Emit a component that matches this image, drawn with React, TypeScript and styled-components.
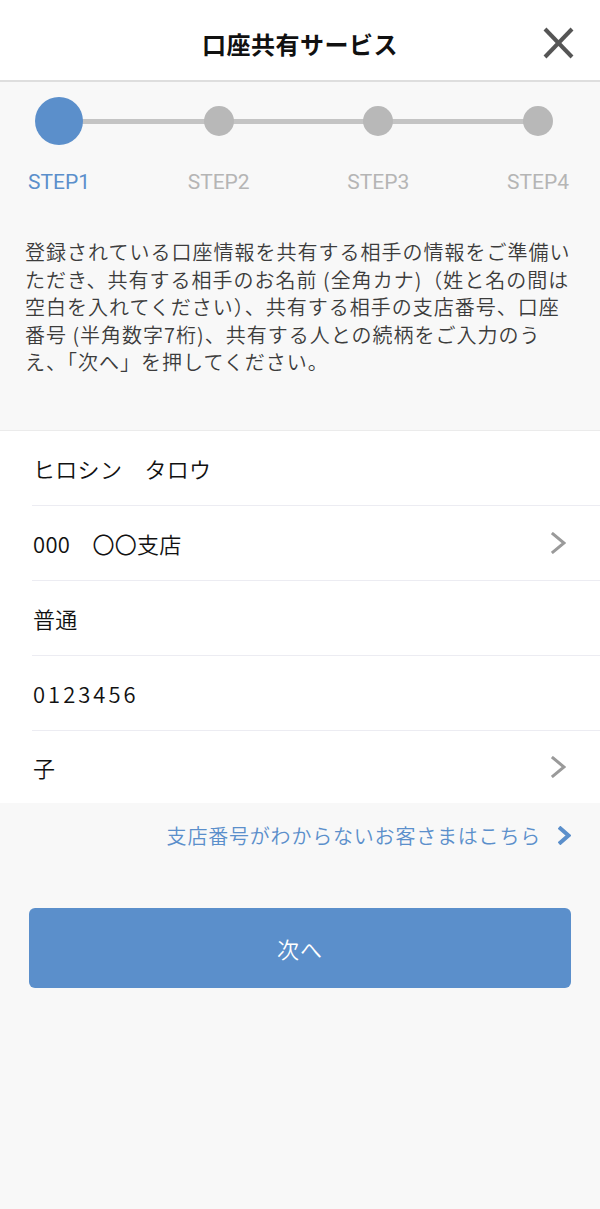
import React from "react";
import styled, { createGlobalStyle } from "styled-components";

const GlobalStyle = createGlobalStyle`
  html, body {
    margin: 0;
    padding: 0;
    background: #f8f8f8;
  }
  body {
    font-family: "Noto Sans CJK JP", "Noto Sans", sans-serif;
  }
  * { box-sizing: border-box; }
`;

const Page = styled.div`
  width: 600px;
  min-height: 1209px;
  background: #f8f8f8;
  display: flex;
  flex-direction: column;
`;

const Header = styled.header`
  height: 82px;
  background: #ffffff;
  border-bottom: 2px solid #dedede;
  display: grid;
  grid-template-columns: 1fr auto 1fr;
  align-items: center;
`;

const Title = styled.h1`
  grid-column: 2;
  margin: 0;
  font-size: 24px;
  font-weight: 700;
  color: #111;
  letter-spacing: 0.5px;
  line-height: 1;
  padding-top: 8px;
`;

const CloseButton = styled.button`
  grid-column: 3;
  justify-self: end;
  margin-right: 26px;
  margin-top: 6px;
  width: 31px;
  height: 32px;
  padding: 0;
  border: none;
  background: none;
  display: flex;
`;

const Stepper = styled.div`
  position: relative;
  display: grid;
  grid-template-columns: repeat(4, 118px);
  justify-content: space-between;
  padding: 15px 3px 0 0;
  &::before {
    content: "";
    position: absolute;
    left: 59px;
    right: 62px;
    top: 37px;
    height: 5px;
    background: #c4c4c4;
  }
`;

const Step = styled.div`
  display: flex;
  flex-direction: column;
  align-items: center;
`;

const DotSlot = styled.div`
  height: 48px;
  display: flex;
  align-items: center;
  justify-content: center;
  position: relative;
  z-index: 1;
`;

const Dot = styled.div<{ $active?: boolean }>`
  width: ${(p) => (p.$active ? 48 : 30)}px;
  height: ${(p) => (p.$active ? 48 : 30)}px;
  border-radius: 50%;
  background: ${(p) => (p.$active ? "#5b8fcb" : "#b8b8b8")};
`;

const StepLabel = styled.div<{ $active?: boolean }>`
  margin-top: 25px;
  font-family: Roboto, "Liberation Sans", sans-serif;
  font-size: 21px;
  line-height: 24px;
  color: ${(p) => (p.$active ? "#5b8fcb" : "#b5b5b5")};
`;

const Description = styled.p`
  margin: 44px 0 0;
  padding: 0 25px;
  font-size: 20px;
  font-weight: 350;
  letter-spacing: 1px;
  line-height: 27.5px;
  color: #3c3c3c;
  white-space: nowrap;
`;

const List = styled.div`
  margin-top: 54px;
  background: #fff;
  border-top: 1px solid #ebebeb;
  display: flex;
  flex-direction: column;
`;

const Row = styled.div`
  height: 75px;
  margin-left: 32px;
  padding-right: 34px;
  display: flex;
  align-items: center;
  justify-content: space-between;
  border-bottom: 1px solid #ececf2;
  &:last-child {
    border-bottom: none;
    height: 72px;
  }
`;

const RowText = styled.span<{ $digits?: boolean }>`
  font-size: 22px;
  font-weight: 350;
  color: #111;
  letter-spacing: ${(p) => (p.$digits ? "3px" : "0.3px")};
  padding-left: 1px;
`;

const LinkRow = styled.a`
  margin-top: 19px;
  align-self: flex-end;
  margin-right: 29px;
  display: flex;
  align-items: center;
  gap: 17px;
  text-decoration: none;
  font-size: 20px;
  font-weight: 350;
  letter-spacing: 0.8px;
  line-height: 28px;
  color: #5b8fcb;
`;

const NextButton = styled.button`
  margin: 58px 29px 0;
  height: 80px;
  border: none;
  border-radius: 6px;
  background: #5b8fcb;
  color: #fff;
  font-family: "Noto Sans CJK JP", sans-serif;
  font-size: 22px;
  font-weight: 350;
  letter-spacing: 1px;
`;

const Chevron = ({ color, w, h, sw }: { color: string; w: number; h: number; sw: number }) => (
  <svg width={w} height={h} viewBox={`0 0 ${w} ${h}`} fill="none">
    <polyline
      points={`${sw / 2 + 0.5},${sw / 2 + 0.5} ${w - sw / 2 - 0.5},${h / 2} ${sw / 2 + 0.5},${h - sw / 2 - 0.5}`}
      stroke={color}
      strokeWidth={sw}
      strokeLinecap="square"
      strokeLinejoin="miter"
    />
  </svg>
);

const steps = ["STEP1", "STEP2", "STEP3", "STEP4"];

const rows: { text: string; chevron?: boolean; digits?: boolean }[] = [
  { text: "ヒロシン　タロウ" },
  { text: "000　〇〇支店", chevron: true },
  { text: "普通" },
  { text: "0123456", digits: true },
  { text: "子", chevron: true },
];

export default function App() {
  return (
    <>
      <GlobalStyle />
      <Page>
        <Header>
          <Title>口座共有サービス</Title>
          <CloseButton aria-label="閉じる">
            <svg width="31" height="32" viewBox="0 0 31 32">
              <line x1="2" y1="2" x2="29" y2="30" stroke="#555" strokeWidth="4" />
              <line x1="29" y1="2" x2="2" y2="30" stroke="#555" strokeWidth="4" />
            </svg>
          </CloseButton>
        </Header>

        <Stepper>
          {steps.map((s, i) => (
            <Step key={s}>
              <DotSlot>
                <Dot $active={i === 0} />
              </DotSlot>
              <StepLabel $active={i === 0}>{s}</StepLabel>
            </Step>
          ))}
        </Stepper>

        <Description>
          登録されている口座情報を共有する相手の情報をご準備い
          <br />
          ただき、共有する相手のお名前 (全角カナ)（姓と名の間は
          <br />
          空白を入れてください）、共有する相手の支店番号、口座
          <br />
          番号 (半角数字7桁)、共有する人との続柄をご入力のう
          <br />
          え、「次へ」を押してください。
        </Description>

        <List>
          {rows.map((r) => (
            <Row key={r.text}>
              <RowText $digits={r.digits}>{r.text}</RowText>
              {r.chevron && <Chevron color="#9a9a9a" w={15} h={22} sw={3} />}
            </Row>
          ))}
        </List>

        <LinkRow href="#">
          支店番号がわからないお客さまはこちら
          <Chevron color="#5b8fcb" w={13} h={19} sw={4} />
        </LinkRow>

        <NextButton>次へ</NextButton>
      </Page>
    </>
  );
}
